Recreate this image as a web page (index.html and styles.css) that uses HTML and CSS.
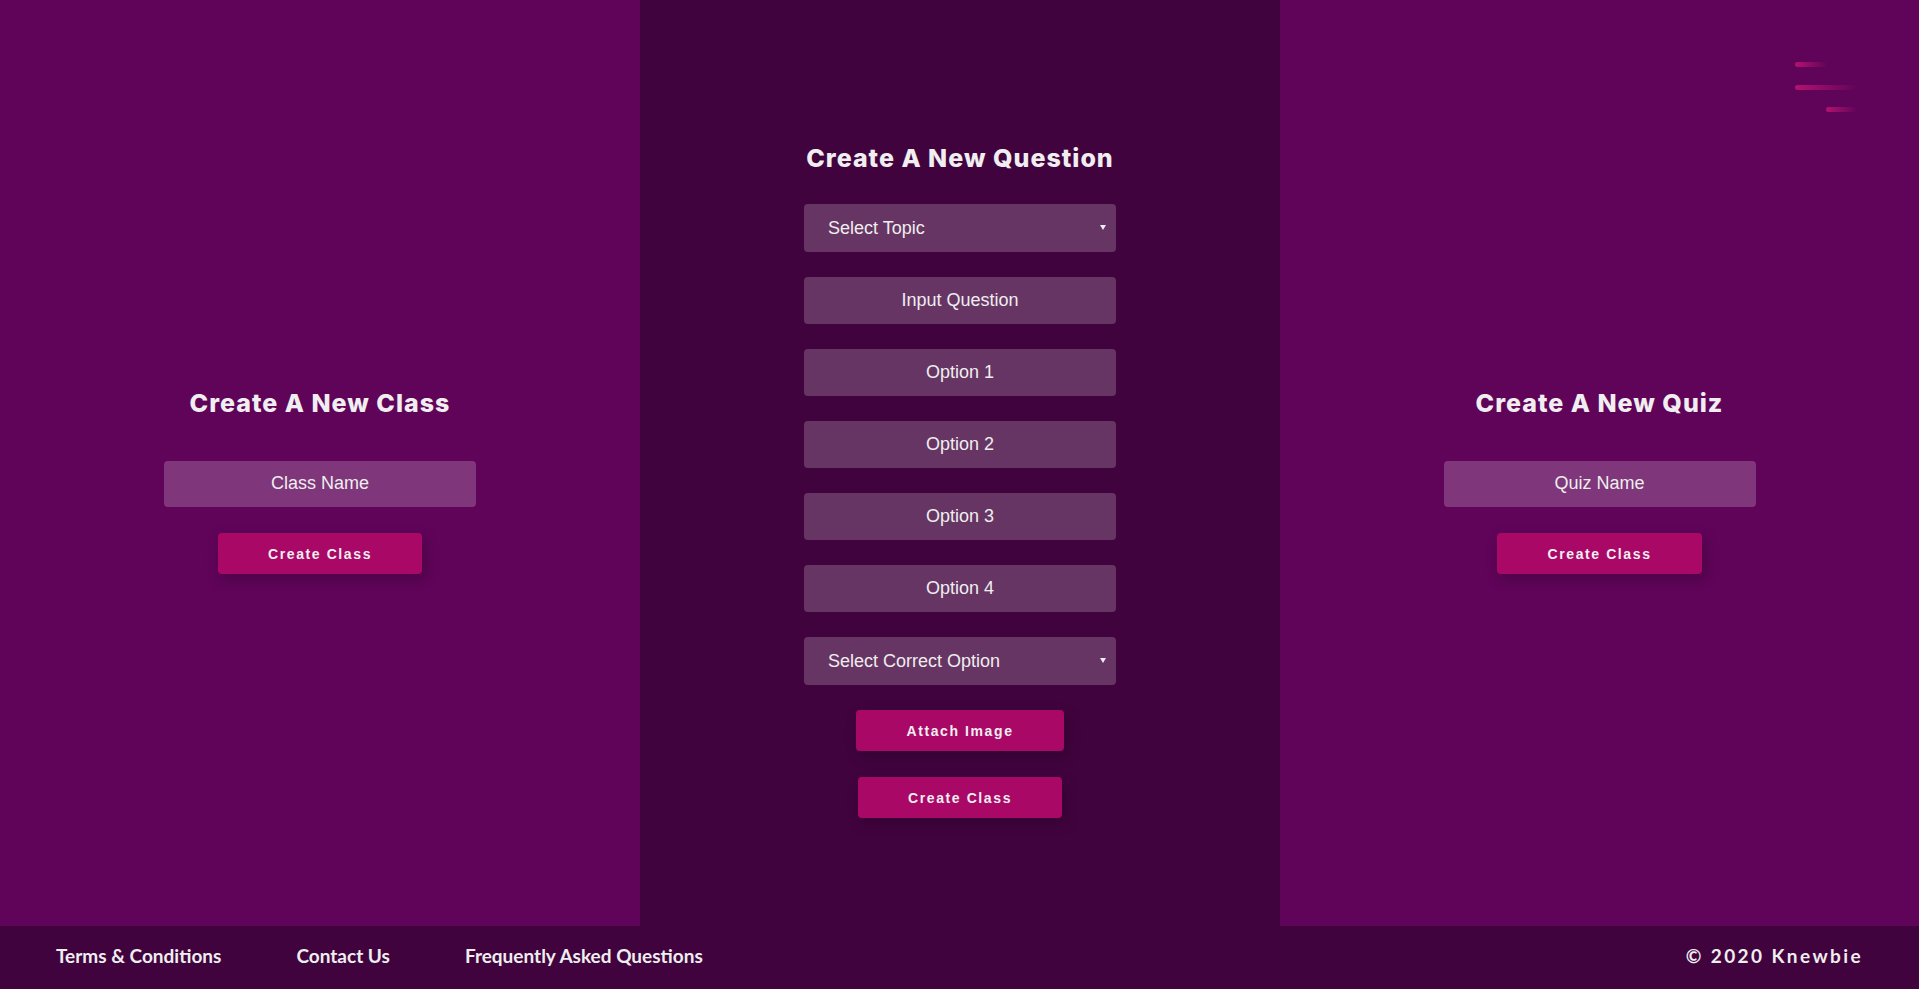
FILE: index.html
```html
<!DOCTYPE html>
<html lang="en">
<head>
<meta charset="utf-8">
<title>Knewbie - Dashboard</title>
<link rel="stylesheet" href="styles.css">
</head>
<body>
<main class="panels">
  <section class="panel panel-side">
    <div class="group group-side">
      <h2 class="panel-title">Create A New Class</h2>
      <input class="field field-side" type="text" placeholder="Class Name">
      <button class="btn" type="button">Create Class</button>
    </div>
  </section>
  <section class="panel panel-mid">
    <div class="group group-mid">
      <h2 class="panel-title">Create A New Question</h2>
      <div class="select-wrap">
        <select class="field field-mid field-select"><option>Select Topic</option></select>
      </div>
      <input class="field field-mid" type="text" placeholder="Input Question">
      <input class="field field-mid" type="text" placeholder="Option 1">
      <input class="field field-mid" type="text" placeholder="Option 2">
      <input class="field field-mid" type="text" placeholder="Option 3">
      <input class="field field-mid" type="text" placeholder="Option 4">
      <div class="select-wrap">
        <select class="field field-mid field-select"><option>Select Correct Option</option></select>
      </div>
      <button class="btn" type="button">Attach Image</button>
      <button class="btn" type="button">Create Class</button>
    </div>
  </section>
  <section class="panel panel-side">
    <div class="group group-side">
      <h2 class="panel-title">Create A New Quiz</h2>
      <input class="field field-side" type="text" placeholder="Quiz Name">
      <button class="btn" type="button">Create Class</button>
    </div>
  </section>
</main>
<button class="menu-btn" type="button" aria-label="Menu">
  <span class="bar bar-short"></span>
  <span class="bar bar-long"></span>
  <span class="bar bar-end"></span>
</button>
<footer class="site-footer">
  <nav class="footer-links">
    <a href="#">Terms &amp; Conditions</a>
    <a href="#">Contact Us</a>
    <a href="#">Frequently Asked Questions</a>
  </nav>
  <div class="copyright">© 2020 Knewbie</div>
</footer>
</body>
</html>
```
FILE: styles.css
```css
* { box-sizing: border-box; }
html, body { margin: 0; padding: 0; }
body {
  background: #41033e;
  color: #eeeeee;
  font-family: "Liberation Sans", Arial, sans-serif;
  overflow: hidden;
  height: 989px;
}
.panels {
  display: grid;
  grid-template-columns: 640px 640px 1fr;
  height: 926px;
}
.panel {
  display: flex;
  flex-direction: column;
  align-items: center;
  justify-content: center;
  padding-top: 35px;
}
.panel-side { background: #600459; }
.panel-mid { background: #41033e; }
.group {
  display: flex;
  flex-direction: column;
  align-items: center;
}
.panel-title {
  margin: 0;
  padding-top: 1px;
  font-family: "Inter", "Open Sans", sans-serif;
  font-weight: 800;
  font-size: 25px;
  line-height: 29px;
  color: #f0eef0;
  letter-spacing: 1px;
}
.group-side .panel-title { margin-bottom: 43px; }
.group-mid .panel-title { margin-bottom: 31px; }
.field {
  width: 312px;
  height: 47px;
  border: none;
  border-radius: 4px;
  background: rgba(255, 255, 255, 0.2);
  color: #eeeeee;
  font-family: "Liberation Sans", Arial, sans-serif;
  font-size: 18px;
  text-align: center;
  outline: none;
  padding: 0 12px;
}
.field::placeholder { color: #eeeeee; opacity: 1; }
.field-side { height: 46px; margin-bottom: 26px; }
.field-mid { margin-bottom: 25px; }
.select-wrap {
  position: relative;
  height: 48px;
  margin-bottom: 25px;
}
.select-wrap::after {
  content: "";
  position: absolute;
  right: 10px;
  top: 21px;
  border-left: 3.5px solid transparent;
  border-right: 3.5px solid transparent;
  border-top: 5px solid #eeeeee;
  pointer-events: none;
}
.field-select {
  -webkit-appearance: none;
  appearance: none;
  height: 48px;
  margin: 0;
  text-align: left;
  padding: 0 30px 0 24px;
}
.btn {
  height: 41px;
  padding: 1px 50px 0;
  border: none;
  border-radius: 4px;
  background: #aa0866;
  color: #f2eef2;
  font-family: "Liberation Sans", Arial, sans-serif;
  font-weight: 700;
  font-size: 14px;
  letter-spacing: 1.6px;
  box-shadow: 3px 5px 14px rgba(0, 0, 0, 0.22);
  cursor: pointer;
}
.group-mid .btn + .btn { margin-top: 26px; }
.menu-btn {
  position: absolute;
  left: 1795px;
  top: 62px;
  width: 62px;
  padding: 0;
  border: none;
  background: none;
  display: flex;
  flex-direction: column;
  align-items: flex-start;
  gap: 17.5px;
}
.bar {
  display: block;
  height: 5px;
  border-radius: 3px;
  background: linear-gradient(to right, #b3136f, rgba(179, 19, 111, 0));
}
.bar-short { width: 32px; }
.bar-long { width: 62px; }
.bar-end { width: 31px; align-self: flex-end; }
.site-footer {
  height: 63px;
  background: #41033e;
  display: flex;
  align-items: center;
  justify-content: space-between;
  padding: 0 56px 5px;
  font-family: "Lato", sans-serif;
  font-weight: 700;
  font-size: 19px;
}
.footer-links { display: flex; gap: 75px; }
.footer-links a { color: #eeeeee; text-decoration: none; }
.copyright { letter-spacing: 2.4px; color: #eeeeee; }
```
